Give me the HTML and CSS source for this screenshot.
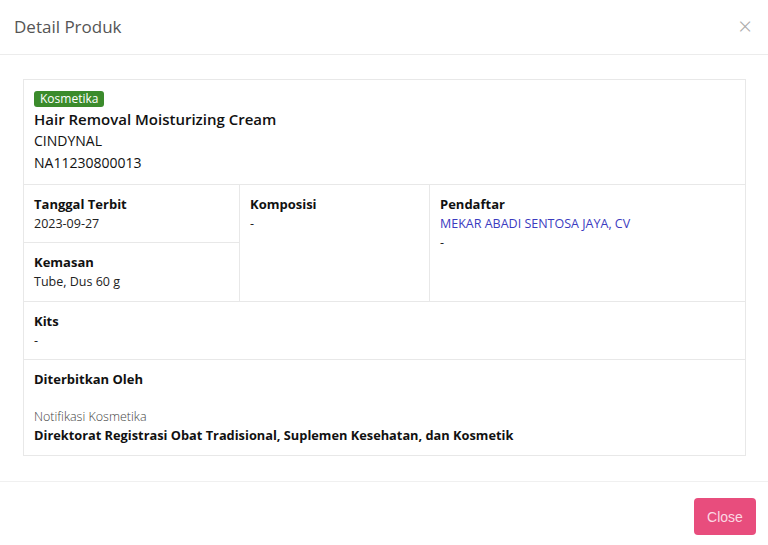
FILE: index.html
```html
<!DOCTYPE html>
<html>
<head>
  <meta charset="utf-8">
  <link rel="stylesheet" href="styles.css">
</head>
<body>
  <div class="modal">
    <div class="modal-header">
      <h2>Detail Produk</h2>
      <span class="close-x">&times;</span>
    </div>

    <div class="modal-body">
      <div class="product-card">
        <div class="product-head">
          <span class="badge">Kosmetika</span>
          <div class="product-name">Hair Removal Moisturizing Cream</div>
          <div class="product-brand">CINDYNAL</div>
          <div class="product-brand">NA11230800013</div>
        </div>

        <div class="info-grid">
          <div class="info-col">
            <div class="cell">
              <div class="label">Tanggal Terbit</div>
              <div class="value">2023-09-27</div>
            </div>
            <div class="cell">
              <div class="label">Kemasan</div>
              <div class="value">Tube, Dus 60 g</div>
            </div>
          </div>
          <div class="cell col-2">
            <div class="label">Komposisi</div>
            <div class="value">-</div>
          </div>
          <div class="cell col-3">
            <div class="label">Pendaftar</div>
            <a href="#" class="value link">MEKAR ABADI SENTOSA JAYA, CV</a>
            <div class="value">-</div>
          </div>
        </div>

        <div class="cell row">
          <div class="label">Kits</div>
          <div class="value">-</div>
        </div>

        <div class="cell row last">
          <div class="label">Diterbitkan Oleh</div>
          <div class="value light">Notifikasi Kosmetika</div>
          <div class="value strong">Direktorat Registrasi Obat Tradisional, Suplemen Kesehatan, dan Kosmetik</div>
        </div>
      </div>
    </div>

    <div class="modal-footer">
      <button class="close-btn">Close</button>
    </div>
  </div>
</body>
</html>
```

FILE: styles.css
```css
body {
  margin: 0;
  font-family: "Open Sans", sans-serif;
  background: #fff;
  color: #111;
}

.modal {
  width: 768px;
}

.modal-header {
  display: flex;
  justify-content: space-between;
  align-items: center;
  padding: 0 16px 2px 14px;
  box-sizing: border-box;
  height: 55px;
  border-bottom: 1px solid #ececec;
}

.modal-header h2 {
  margin: 0;
  font-size: 17px;
  font-weight: 500;
  color: #555;
}

.close-x {
  font-size: 24px;
  font-weight: 300;
  color: #aaa;
  line-height: 1;
}

.modal-body {
  padding: 24px 22px 25px 23px;
  border-bottom: 1px solid #f0f0f0;
}

.product-card {
  border: 1px solid #e8e8e8;
}

.product-head {
  display: flex;
  flex-direction: column;
  align-items: flex-start;
  padding: 11px 10px 10px;
  height: 83px;
  border-bottom: 1px solid #e8e8e8;
}

.badge {
  background: #3b8b2c;
  color: #fff;
  font-size: 12px;
  padding: 0 6px;
  line-height: 16px;
  border-radius: 3px;
}

.product-name {
  font-size: 15px;
  font-weight: 600;
  margin-top: 1px;
  line-height: 22px;
}

.product-brand {
  font-size: 14px;
  font-weight: 500;
  line-height: 22px;
}

.info-grid {
  display: grid;
  grid-template-columns: 216px 190px 1fr;
  border-bottom: 1px solid #e8e8e8;
}

.info-col .cell:first-child {
  border-bottom: 1px solid #e8e8e8;
}

.cell {
  padding: 10px 10px 0;
  height: 58px;
  box-sizing: border-box;
}

.info-col {
  border-right: 1px solid #e8e8e8;
}

.col-2 {
  border-right: 1px solid #e8e8e8;
  height: auto;
}

.col-3 {
  height: auto;
}

.cell.row {
  height: 58px;
  border-bottom: 1px solid #e8e8e8;
}

.cell.row.last {
  height: 95px;
  border-bottom: none;
}

.label {
  font-size: 13px;
  font-weight: 700;
  line-height: 19px;
}

.value {
  display: block;
  font-size: 12.5px;
  line-height: 19px;
  color: #222;
}

.link {
  color: #3b3bbf;
  text-decoration: none;
}

.light {
  margin-top: 18px;
  color: #444;
  font-weight: 300;
}

.strong {
  font-size: 12.8px;
  font-weight: 700;
  color: #111;
}

.modal-footer {
  display: flex;
  justify-content: flex-end;
  padding: 16px 12px;
}

.close-btn {
  background: #e84d7d;
  color: #fbd9e4;
  border: none;
  border-radius: 4px;
  width: 62px;
  height: 37px;
  font-family: "Liberation Sans", Arial, sans-serif;
  font-size: 14px;
}
```
